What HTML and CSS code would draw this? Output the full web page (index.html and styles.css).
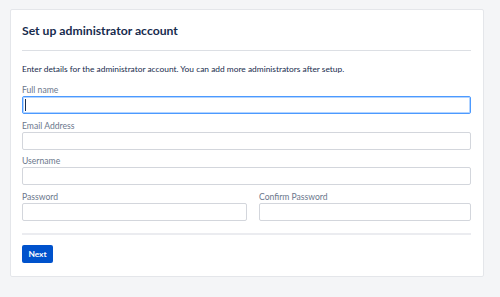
FILE: index.html
```html
<!DOCTYPE html>
<html lang="en">
<head>
    <meta charset="UTF-8">
    <title>Set up administrator account</title>
    <link rel="stylesheet" href="styles.css">
</head>
<body>
    <div class="card">
        <div class="card-header">
            <h1 class="title">Set up administrator account</h1>
        </div>

        <p class="intro">Enter details for the administrator account. You can add more administrators after setup.</p>

        <form class="form">
            <div class="field">
                <label for="fullName">Full name</label>
                <div class="input-wrap">
                    <input type="text" id="fullName" class="focused">
                    <span class="caret"></span>
                </div>
            </div>
            <div class="field">
                <label for="email">Email Address</label>
                <input type="text" id="email">
            </div>
            <div class="field">
                <label for="username">Username</label>
                <input type="text" id="username">
            </div>
            <div class="field-row">
                <div class="field">
                    <label for="password">Password</label>
                    <input type="password" id="password">
                </div>
                <div class="field">
                    <label for="confirmPassword">Confirm Password</label>
                    <input type="password" id="confirmPassword">
                </div>
            </div>

            <div class="actions">
                <button type="button" class="btn-primary">Next</button>
            </div>
        </form>
    </div>
</body>
</html>
```

FILE: styles.css
```css
* {
    margin: 0;
    padding: 0;
    box-sizing: border-box;
}

body {
    font-family: Lato, "Noto Sans", sans-serif;
    background: #f4f5f7;
    color: #172b4d;
}

.card {
    margin: 9px 16px 0 10px;
    background: #fff;
    border: 1px solid #e4e6ea;
    border-radius: 2px;
    padding: 0 12px 13px 11px;
}

.card-header {
    height: 41px;
    display: flex;
    align-items: center;
    padding-top: 1px;
    border-bottom: 1px solid #dcdfe4;
}

.title {
    font-size: 12.2px;
    font-weight: 700;
    color: #172b4d;
}

.intro {
    margin-top: 12px;
    font-size: 8.4px;
    line-height: 12px;
    color: #172b4d;
}

.form {
    margin-top: 9px;
    display: flex;
    flex-direction: column;
    gap: 5.5px;
}

.field {
    display: flex;
    flex-direction: column;
}

.field label {
    font-size: 8.6px;
    line-height: 12px;
    color: #6b778c;
}

.field input {
    display: block;
    height: 18px;
    width: 100%;
    border: 1px solid #d3d6dc;
    border-radius: 2px;
    background: #fff;
    outline: none;
}

.field input.focused {
    border-color: #4c9aff;
    box-shadow: inset 0 0 0 1px #b3d4ff;
}

.input-wrap {
    position: relative;
}

.caret {
    position: absolute;
    left: 3px;
    top: 3px;
    width: 1px;
    height: 12px;
    background: #172b4d;
}

.field-row {
    display: grid;
    grid-template-columns: 225px 1fr;
    gap: 12px;
}

.actions {
    margin-top: 6.5px;
    padding-top: 10px;
    border-top: 2px solid #ebecf0;
}

.btn-primary {
    display: block;
    height: 18px;
    width: 31px;
    border: none;
    border-radius: 2px;
    background: #0052cc;
    color: #fff;
    font-family: inherit;
    font-size: 8.4px;
    font-weight: 700;
    cursor: pointer;
}
```
